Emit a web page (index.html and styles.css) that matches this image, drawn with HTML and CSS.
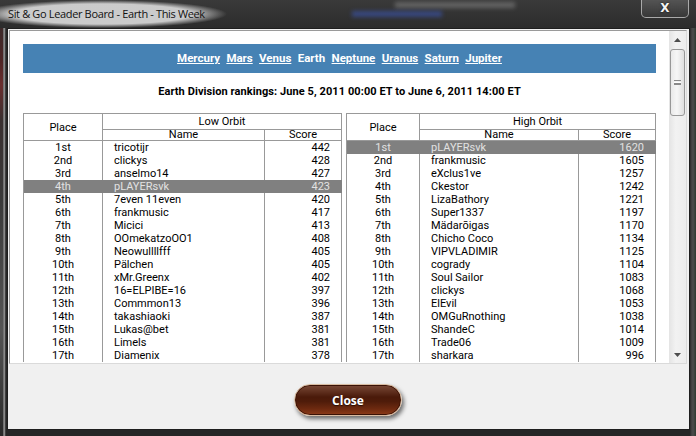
FILE: index.html
```html
<!DOCTYPE html>
<html lang="en">
<head>
<meta charset="UTF-8">
<title>Sit &amp; Go Leader Board - Earth - This Week</title>
<link rel="stylesheet" href="styles.css">
</head>
<body>
<div class="window">
    <div class="titlebar">
        <span class="title">Sit &amp; Go Leader Board - Earth - This Week</span>
        <span class="haze haze-light"></span>
        <span class="haze haze-blue"></span>
        <div class="close-x">X</div>
    </div>
    <div class="client">
        <div class="browser">
            <div class="page">
                <div class="nav">
                    <a href="#">Mercury</a>
                    <a href="#">Mars</a>
                    <a href="#">Venus</a>
                    <span class="current">Earth</span>
                    <a href="#">Neptune</a>
                    <a href="#">Uranus</a>
                    <a href="#">Saturn</a>
                    <a href="#">Jupiter</a>
                </div>
                <div class="heading">Earth Division rankings: June 5, 2011 00:00 ET to June 6, 2011 14:00 ET</div>
                <div class="boards">
                    <table class="board board-low">
                        <colgroup><col class="c-place"><col class="c-name"><col class="c-score"></colgroup>
                        <thead>
                            <tr class="h1"><th rowspan="2" class="h-place">Place</th><th colspan="2">Low Orbit</th></tr>
                            <tr class="h2"><th>Name</th><th>Score</th></tr>
                        </thead>
                        <tbody>
                            <tr><td>1st</td><td>tricotijr</td><td>442</td></tr>
                            <tr><td>2nd</td><td>clickys</td><td>428</td></tr>
                            <tr><td>3rd</td><td>anselmo14</td><td>427</td></tr>
                            <tr class="hl"><td>4th</td><td>pLAYERsvk</td><td>423</td></tr>
                            <tr><td>5th</td><td>7even 11even</td><td>420</td></tr>
                            <tr><td>6th</td><td>frankmusic</td><td>417</td></tr>
                            <tr><td>7th</td><td>Micici</td><td>413</td></tr>
                            <tr><td>8th</td><td>OOmekatzoOO1</td><td>408</td></tr>
                            <tr><td>9th</td><td>Neowullllfff</td><td>405</td></tr>
                            <tr><td>10th</td><td>Pälchen</td><td>405</td></tr>
                            <tr><td>11th</td><td>xMr.Greenx</td><td>402</td></tr>
                            <tr><td>12th</td><td>16=ELPIBE=16</td><td>397</td></tr>
                            <tr><td>13th</td><td>Commmon13</td><td>396</td></tr>
                            <tr><td>14th</td><td>takashiaoki</td><td>387</td></tr>
                            <tr><td>15th</td><td>Lukas@bet</td><td>381</td></tr>
                            <tr><td>16th</td><td>Limels</td><td>381</td></tr>
                            <tr><td>17th</td><td>Diamenix</td><td>378</td></tr>
                        </tbody>
                    </table>
                    <table class="board board-high">
                        <colgroup><col class="c-place"><col class="c-name"><col class="c-score"></colgroup>
                        <thead>
                            <tr class="h1"><th rowspan="2" class="h-place">Place</th><th colspan="2">High Orbit</th></tr>
                            <tr class="h2"><th>Name</th><th>Score</th></tr>
                        </thead>
                        <tbody>
                            <tr class="hl"><td>1st</td><td>pLAYERsvk</td><td>1620</td></tr>
                            <tr><td>2nd</td><td>frankmusic</td><td>1605</td></tr>
                            <tr><td>3rd</td><td>eXclus1ve</td><td>1257</td></tr>
                            <tr><td>4th</td><td>Ckestor</td><td>1242</td></tr>
                            <tr><td>5th</td><td>LizaBathory</td><td>1221</td></tr>
                            <tr><td>6th</td><td>Super1337</td><td>1197</td></tr>
                            <tr><td>7th</td><td>Mädarõigas</td><td>1170</td></tr>
                            <tr><td>8th</td><td>Chicho Coco</td><td>1134</td></tr>
                            <tr><td>9th</td><td>VIPVLADIMIR</td><td>1125</td></tr>
                            <tr><td>10th</td><td>cogrady</td><td>1104</td></tr>
                            <tr><td>11th</td><td>Soul Sailor</td><td>1083</td></tr>
                            <tr><td>12th</td><td>clickys</td><td>1068</td></tr>
                            <tr><td>13th</td><td>ElEvil</td><td>1053</td></tr>
                            <tr><td>14th</td><td>OMGuRnothing</td><td>1038</td></tr>
                            <tr><td>15th</td><td>ShandeC</td><td>1014</td></tr>
                            <tr><td>16th</td><td>Trade06</td><td>1009</td></tr>
                            <tr><td>17th</td><td>sharkara</td><td>996</td></tr>
                        </tbody>
                    </table>
                </div>
            </div>
            <div class="scrollbar">
                <div class="sb-btn">
                    <svg width="7" height="4" viewBox="0 0 7 4"><path d="M0 4 L3.5 0 L7 4 Z" fill="#4d4d4d"/></svg>
                </div>
                <div class="sb-thumb"><span class="grip"></span></div>
                <div class="sb-track"></div>
                <div class="sb-btn">
                    <svg width="7" height="4" viewBox="0 0 7 4"><path d="M0 0 L3.5 4 L7 0 Z" fill="#4d4d4d"/></svg>
                </div>
            </div>
        </div>
        <div class="footer">
            <button class="close-btn">Close</button>
        </div>
    </div>
</div>
</body>
</html>
```

FILE: styles.css
```css
* {
    box-sizing: border-box;
}
body {
    margin: 0;
    background: #1c1c1c;
    font-family: "Open Sans", sans-serif;
}
.window {
    width: 696px;
    height: 436px;
    display: flex;
    flex-direction: column;
    overflow: hidden;
    background:
        linear-gradient(#2e2e2e 0, #4e2626 60px, #6a2e2e 85px, #3a3030 120px, #3a3a3a 200px, #555 330px, #2a2a2a 436px) left top / 3px 100% no-repeat,
        linear-gradient(90deg, #2a2a2a 0, #2a2a2a 3px, #b8b8b8 4px, #5a5a5a 5px, #262626 6px, #262626 690px, #3c3c3c 691px, #4c4c4c 693px, #2d3a30 696px);
}

/* title bar */
.titlebar {
    height: 28px;
    position: relative;
    padding: 0;
    background: linear-gradient(#3a3a3a, #2c2c2c);
}
.title {
    display: inline-block;
    height: 28px;
    padding: 6px 22px 0 8px;
    font-size: 11px;
    letter-spacing: -0.35px;
    color: #111;
    background: radial-gradient(farthest-side at 45% 50%, rgba(208, 208, 208, 0.97) 72%, rgba(208, 208, 208, 0));
}
.haze {
    position: absolute;
    filter: blur(2px);
}
.haze-light {
    left: 395px;
    top: 2px;
    width: 120px;
    height: 6px;
    background: rgba(180, 180, 180, 0.35);
}
.haze-blue {
    left: 352px;
    top: 11px;
    width: 90px;
    height: 6px;
    background: rgba(60, 90, 190, 0.55);
}
.close-x {
    position: absolute;
    right: 7px;
    top: -1px;
    width: 48px;
    height: 19px;
    border: 1px solid rgba(220, 220, 220, 0.65);
    border-top: none;
    border-radius: 0 0 5px 5px;
    background: linear-gradient(rgba(255, 255, 255, 0.14), rgba(255, 255, 255, 0.03));
    color: #f4f4f4;
    font: bold 12px "DejaVu Sans", sans-serif;
    line-height: 18px;
    text-align: center;
    text-shadow: 0 0 2px #000;
}

/* client area */
.client {
    margin-left: 7px;
    width: 683px;
    height: 402px;
    border: 1px solid #1e1e1e;
    padding: 1px 2px 0 1px;
    background: #f0f0f0;
    display: flex;
    flex-direction: column;
}
.browser {
    height: 334px;
    border: 1px solid #9a9a9a;
    border-bottom-color: #dadada;
    border-right-color: #dadada;
    display: flex;
    background: #fff;
}
.page {
    width: 659px;
    height: 332px;
    padding: 13px 13px 0;
    overflow: hidden;
    font-family: Roboto, sans-serif;
    font-size: 11px;
    color: #000;
}
.nav {
    height: 29px;
    background: #4682b4;
    text-align: center;
    line-height: 29px;
    font-size: 11.5px;
    font-weight: bold;
    color: #fff;
}
.nav a, .nav .current {
    color: #fff;
    margin: 0 1.75px;
}
.heading {
    margin-top: 12px;
    line-height: 14px;
    text-align: center;
    font-weight: bold;
    letter-spacing: 0.08px;
}
.boards {
    margin-top: 14px;
    display: flex;
    gap: 4px;
}
.board {
    border-collapse: separate;
    border-spacing: 0;
    table-layout: fixed;
    border-left: 1px solid #999;
    border-top: 1px solid #999;
}
.board-low {
    width: 319px;
}
.board-high {
    width: 310px;
}
.board-low .c-place { width: 79px; }
.board-low .c-name { width: 162px; }
.board-high .c-place { width: 73px; }
.board-high .c-name { width: 159px; }
.c-score { width: 77px; }
.board th {
    font-weight: normal;
    padding: 0;
    border-right: 1px solid #999;
    border-bottom: 1px solid #999;
    text-align: center;
}
.board .h1 th {
    height: 16px;
    line-height: 15px;
}
.board .h2 th {
    height: 11px;
    line-height: 10px;
}
.board td {
    height: 13px;
    line-height: 13px;
    padding: 0;
    border-right: 1px solid #999;
    white-space: nowrap;
}
.board td:nth-child(1) {
    text-align: center;
}
.board td:nth-child(2) {
    padding-left: 11px;
}
.board td:nth-child(3) {
    text-align: right;
    padding-right: 11px;
}
.board .hl td {
    background: #808080;
    color: #e2e2e2;
    border-right-color: #808080;
}

/* fake scrollbar */
.scrollbar {
    width: 17px;
    display: flex;
    flex-direction: column;
    background: linear-gradient(90deg, #e4e4e4, #f2f2f2 40%, #ececec);
}
.sb-btn {
    height: 17px;
    display: flex;
    align-items: center;
    justify-content: center;
}
.sb-thumb {
    margin: 1px 1px 0;
    height: 67px;
    border: 1px solid #979797;
    border-radius: 3px;
    background: linear-gradient(90deg, #e9e9e9, #f6f6f6 45%, #dedede);
    display: flex;
    align-items: center;
    justify-content: center;
}
.grip {
    width: 7px;
    height: 5px;
    border-top: 1px solid #8a8a8a;
    border-bottom: 1px solid #8a8a8a;
    background: linear-gradient(#fff 0 1px, #8a8a8a 1px 2px, transparent 2px) 0 1px / 100% 3px no-repeat;
}
.sb-track {
    flex: 1;
}

/* footer */
.footer {
    height: 65px;
    display: flex;
    justify-content: center;
    padding-top: 20px;
}
.close-btn {
    width: 108px;
    height: 32px;
    border: 1px solid #d8bca2;
    border-radius: 16px;
    background: linear-gradient(#7a4a38 0, #4a1a0a 40%, #4f1c0a 55%, #6e2a10 80%, #8e3c1a 100%);
    box-shadow: 2px 3px 4px rgba(0, 0, 0, 0.55), inset 0 0 0 1px #3a1206;
    color: #fff;
    font: bold 12px "Open Sans", sans-serif;
    text-shadow: 0 1px 1px #2a0a00;
    padding: 0;
}
```
